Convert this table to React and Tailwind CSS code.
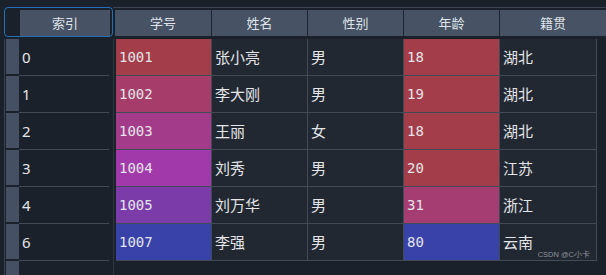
const rows = [
  { idx: "0", id: "1001", name: "张小亮", sex: "男", age: "18", home: "湖北", idBg: "bg-[#a43d4a]", ageBg: "bg-[#a43d4a]" },
  { idx: "1", id: "1002", name: "李大刚", sex: "男", age: "19", home: "湖北", idBg: "bg-[#a53c6a]", ageBg: "bg-[#a43d4a]" },
  { idx: "2", id: "1003", name: "王丽", sex: "女", age: "18", home: "湖北", idBg: "bg-[#a33a8a]", ageBg: "bg-[#a43d4a]" },
  { idx: "3", id: "1004", name: "刘秀", sex: "男", age: "20", home: "江苏", idBg: "bg-[#a139aa]", ageBg: "bg-[#a43d4a]" },
  { idx: "4", id: "1005", name: "刘万华", sex: "男", age: "31", home: "浙江", idBg: "bg-[#7b3ba8]", ageBg: "bg-[#a53c72]" },
  { idx: "6", id: "1007", name: "李强", sex: "男", age: "80", home: "云南", idBg: "bg-[#3942a8]", ageBg: "bg-[#3942a8]" },
];

const cols = ["学号", "姓名", "性别", "年龄", "籍贯"];

const mono = "font-['DejaVu_Sans_Mono','Liberation_Mono',monospace] text-[14px]";
const cjk = "font-['Noto_Sans_CJK_SC',sans-serif] text-[15px]";

export default function App() {
  return (
    <div className="relative flex h-[275px] w-[606px] overflow-hidden bg-[#1b212a] text-[#e3e5e8] font-['Noto_Sans_CJK_SC',sans-serif]">
      {/* frozen index column */}
      <div className="ml-[4px] flex w-[109px] flex-col pt-[7px]">
        <div className="flex h-[30px] rounded-[4px] border border-[#2271b8] pt-[2px]">
          <div className="w-[15px]" />
          <div className="flex h-[26px] w-[90px] items-center justify-center bg-[#475264] text-[13px] text-[#dfe3ea]">索引</div>
        </div>
        <div className="mt-[2px] flex flex-1 flex-col border-l border-[#394250] pl-px">
          {rows.map((r) => (
            <div key={r.idx} className="flex h-[37px]">
              <div className="w-[13px] border-b-2 border-[#1b212a] bg-[#465063]" />
              <div className={`flex w-[90px] items-center border-b border-[#414a57] pl-[3px] font-['Noto_Sans','Noto_Sans_CJK_SC',sans-serif] text-[15px]`}>{r.idx}</div>
            </div>
          ))}
          <div className="flex flex-1">
            <div className="w-[13px] bg-[#465063]" />
          </div>
        </div>
      </div>

      {/* main table */}
      <div className="flex flex-1 flex-col">
        <div className="mt-[7px] flex h-[30px] border-t border-[#3b4452] pl-[2px] pt-[2px]">
          {cols.map((c, i) => (
            <div
              key={c}
              className={`flex h-[26px] items-center justify-center bg-[#475264] text-[13px] text-[#dfe3ea] ${i === 0 ? "w-[97px] border-r border-[#1f252e]" : i === cols.length - 1 ? "flex-1" : "w-[96px] border-r border-[#1f252e]"}`}
            >
              {c}
            </div>
          ))}
        </div>
        <div className="mt-[2px] flex flex-1 flex-col border-l border-[#2e3640] pl-[2px]">
          {rows.map((r) => (
            <div key={r.idx} className="flex h-[37px] w-[481px] border-b border-r border-[#414a57] bg-[#222832]">
              <div className={`flex w-[96px] items-center border-r border-[#414a57] pl-[3px] ${r.idBg} ${mono}`}>{r.id}</div>
              <div className={`flex w-[96px] items-center border-r border-[#414a57] pl-[3px] ${cjk}`}>{r.name}</div>
              <div className={`flex w-[96px] items-center border-r border-[#414a57] pl-[3px] ${cjk}`}>{r.sex}</div>
              <div className={`flex w-[96px] items-center border-r border-[#414a57] pl-[3px] ${r.ageBg} ${mono}`}>{r.age}</div>
              <div className={`flex flex-1 items-center pl-[3px] ${cjk}`}>{r.home}</div>
            </div>
          ))}
        </div>
      </div>

      <div className="absolute bottom-[15px] right-[16px] font-['Liberation_Sans',sans-serif] text-[7.5px] text-[#8b9097]">CSDN @C小卡</div>
    </div>
  );
}
